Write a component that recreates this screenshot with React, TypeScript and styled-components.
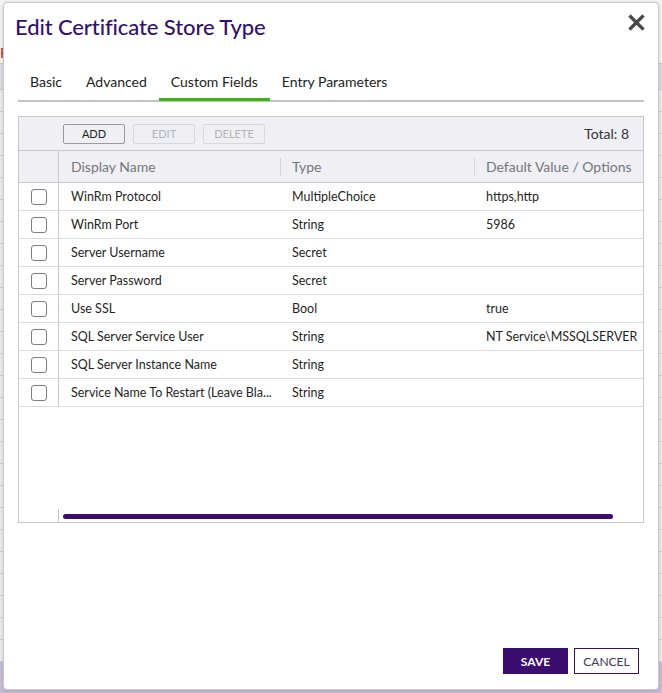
import { createGlobalStyle, styled } from "styled-components";

const GlobalStyle = createGlobalStyle`
	html, body {
		margin: 0;
		padding: 0;
		background: #f4f4f4;
		font-family: Lato, "Liberation Sans", sans-serif;
	}
	* { box-sizing: border-box; }
`;

const Page = styled.div`
	position: relative;
	width: 662px;
	height: 693px;
	overflow: hidden;
	background: #f4f4f4;
`;
const PageTop = styled.div`
	height: 64px;
	padding: 44px 0 0 0;
	border-bottom: 1px solid #c9c9cf;
	color: #b3261e;
	font-size: 14px;
`;
const PageHead = styled.div`
	height: 26px;
	background: #dcdce3;
	border-bottom: 1px solid #c9c9cf;
`;
const PageRow = styled.div<{ $tint?: boolean }>`
	height: 22px;
	background: ${(p) => (p.$tint ? "#c7bdd8" : "#ececec")};
	border-bottom: 1px solid #d0d0d0;
`;

const Modal = styled.div`
	position: absolute;
	left: 3px;
	top: 2px;
	width: 656px;
	height: 688px;
	background: #fff;
	border: 1px solid #c8c8c8;
	border-radius: 4px;
	box-shadow: 0 1px 4px rgba(0, 0, 0, 0.15);
	display: flex;
	flex-direction: column;
	padding: 0 14px 14px 14px;
`;
const Header = styled.div`
	display: flex;
	align-items: center;
	justify-content: space-between;
	height: 46px;
`;
const Title = styled.h1`
	margin: 0 0 0 -3px;
	font-size: 22px;
	font-weight: 500;
	color: #32126a;
	letter-spacing: -0.1px;
`;
const Close = styled.button`
	border: 0;
	background: none;
	padding: 0;
	margin-right: -1px;
	margin-top: -7px;
	cursor: pointer;
	display: flex;
`;
const Tabs = styled.div`
	display: flex;
	margin-top: 24px;
	border-bottom: 2px solid #c2c2c6;
`;
const Tab = styled.div<{ $active?: boolean }>`
	padding: 0 12px 8px 12px;
	font-size: 14px;
	color: #222;
	border-bottom: 3px solid ${(p) => (p.$active ? "#3db515" : "transparent")};
	margin-bottom: -1px;
	cursor: pointer;
`;
const Grid = styled.div`
	margin-top: 14px;
	height: 407px;
	border: 1px solid #c8c8cc;
	display: flex;
	flex-direction: column;
	overflow: hidden;
`;
const Toolbar = styled.div`
	height: 34px;
	background: #f0f0f4;
	display: flex;
	align-items: center;
	gap: 8px;
	padding: 0 14px 0 44px;
	border-bottom: 1px solid #c8c8cc;
`;
const ToolButton = styled.button<{ $disabled?: boolean }>`
	width: 62px;
	height: 20px;
	font-family: Lato, "Liberation Sans", sans-serif;
	font-size: 11px;
	background: #f0f0f4;
	color: ${(p) => (p.$disabled ? "#b4b4b8" : "#222")};
	border: 1px solid ${(p) => (p.$disabled ? "#d8d8dc" : "#9a9a9e")};
	border-radius: 2px;
	padding: 0;
	cursor: pointer;
`;
const Total = styled.div`
	margin-left: auto;
	font-size: 14px;
	color: #333;
`;
const HeadRow = styled.div`
	display: grid;
	grid-template-columns: 40px 221px 194px 1fr;
	height: 32px;
	background: #f0f0f4;
	border-bottom: 1px solid #c8c8cc;
`;
const HeadCell = styled.div<{ $sep?: boolean }>`
	display: flex;
	align-items: center;
	padding-left: 12px;
	font-size: 14px;
	color: #75757a;
	white-space: nowrap;
	position: relative;
	&::before {
		content: "";
		display: ${(p) => (p.$sep ? "block" : "none")};
		position: absolute;
		left: 0;
		top: 7px;
		height: 18px;
		border-left: 1px solid #d6d6da;
	}
`;
const SelectCell = styled.div`
	border-right: 1px solid #c8c8cc;
	display: flex;
	align-items: center;
	justify-content: center;
`;
const Row = styled.div`
	display: grid;
	grid-template-columns: 40px 221px 194px 1fr;
	height: 28px;
	border-bottom: 1px solid #dcdce0;
`;
const Cell = styled.div`
	display: flex;
	align-items: center;
	padding-left: 12px;
	font-size: 12.5px;
	color: #1f1f24;
	white-space: nowrap;
	overflow: hidden;
`;
const Check = styled.span`
	width: 16px;
	height: 16px;
	border: 1px solid #7d7d85;
	border-radius: 3px;
	background: #fff;
`;
const Filler = styled.div`
	flex: 1;
`;
const ScrollRow = styled.div`
	height: 13px;
	display: flex;
`;
const ScrollPin = styled.div`
	width: 40px;
	border-right: 1px solid #c8c8cc;
`;
const ScrollTrack = styled.div`
	flex: 1;
	padding: 5px 0 0 4px;
`;
const Thumb = styled.div`
	width: 550px;
	height: 5px;
	border-radius: 3px;
	background: #3a0e6f;
`;
const Footer = styled.div`
	margin-top: auto;
	display: flex;
	justify-content: flex-end;
	gap: 6px;
	padding-right: 5px;
	margin-bottom: 1px;
`;
const SaveBtn = styled.button`
	width: 65px;
	height: 26px;
	border: 0;
	background: #3b0d6f;
	color: #fff;
	font-family: Lato, "Liberation Sans", sans-serif;
	font-weight: 700;
	font-size: 12px;
	cursor: pointer;
`;
const CancelBtn = styled.button`
	width: 65px;
	height: 26px;
	border: 1px solid #3b0d6f;
	background: #fff;
	color: #3a3a5a;
	font-family: Lato, "Liberation Sans", sans-serif;
	font-size: 12px;
	cursor: pointer;
`;

const fields = [
	["WinRm Protocol", "MultipleChoice", "https,http"],
	["WinRm Port", "String", "5986"],
	["Server Username", "Secret", ""],
	["Server Password", "Secret", ""],
	["Use SSL", "Bool", "true"],
	["SQL Server Service User", "String", "NT Service\\MSSQLSERVER"],
	["SQL Server Instance Name", "String", ""],
	["Service Name To Restart (Leave Bla...", "String", ""],
];

function App() {
	const bgRows = Array.from({ length: 28 });
	return (
		<Page>
			<GlobalStyle />
			<PageTop>Pri</PageTop>
			<PageHead />
			{bgRows.map((_, i) => (
				<PageRow key={i} $tint={i >= 26} />
			))}
			<Modal>
				<Header>
					<Title>Edit Certificate Store Type</Title>
					<Close aria-label="close">
						<svg width="17" height="17" viewBox="0 0 16 16">
							<path d="M2.5 2.5 L13.5 13.5 M13.5 2.5 L2.5 13.5" stroke="#4a4a4a" strokeWidth="3.2" strokeLinecap="square" />
						</svg>
					</Close>
				</Header>
				<Tabs>
					<Tab>Basic</Tab>
					<Tab>Advanced</Tab>
					<Tab $active>Custom Fields</Tab>
					<Tab>Entry Parameters</Tab>
				</Tabs>
				<Grid>
					<Toolbar>
						<ToolButton>ADD</ToolButton>
						<ToolButton $disabled>EDIT</ToolButton>
						<ToolButton $disabled>DELETE</ToolButton>
						<Total>Total: 8</Total>
					</Toolbar>
					<HeadRow>
						<SelectCell />
						<HeadCell>Display Name</HeadCell>
						<HeadCell $sep>Type</HeadCell>
						<HeadCell $sep>Default Value / Options</HeadCell>
					</HeadRow>
					{fields.map(([name, type, value]) => (
						<Row key={name}>
							<SelectCell>
								<Check />
							</SelectCell>
							<Cell>{name}</Cell>
							<Cell>{type}</Cell>
							<Cell>{value}</Cell>
						</Row>
					))}
					<Filler />
					<ScrollRow>
						<ScrollPin />
						<ScrollTrack>
							<Thumb />
						</ScrollTrack>
					</ScrollRow>
				</Grid>
				<Footer>
					<SaveBtn>SAVE</SaveBtn>
					<CancelBtn>CANCEL</CancelBtn>
				</Footer>
			</Modal>
		</Page>
	);
}

export default App;
